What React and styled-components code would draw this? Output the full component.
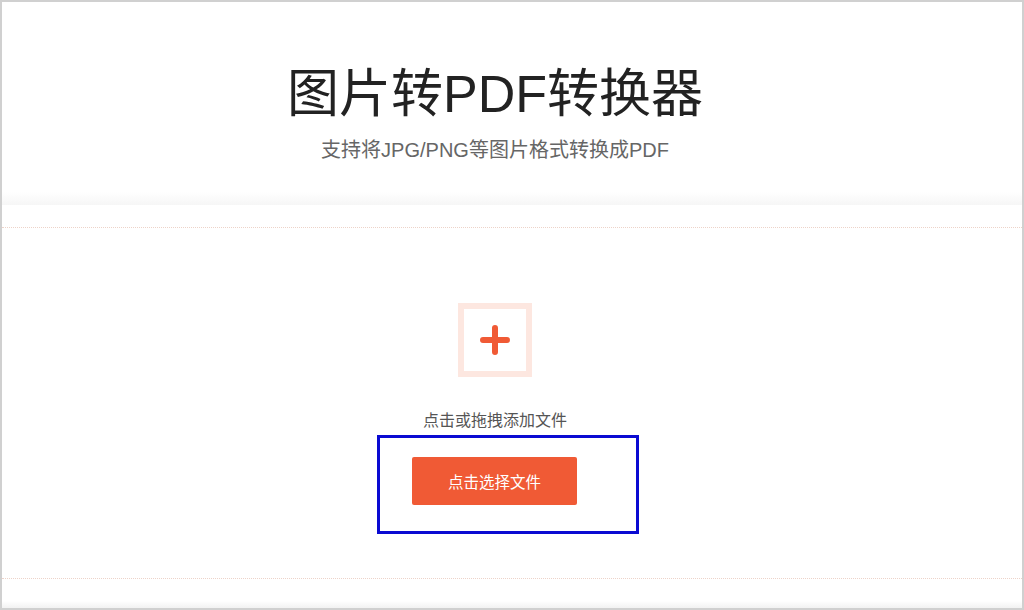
import React from 'react'
import styled, { createGlobalStyle } from 'styled-components'

const GlobalStyle = createGlobalStyle`
  html, body {
    margin: 0;
    padding: 0;
    background: #fff;
  }
  * {
    box-sizing: border-box;
  }
`

const Page = styled.div`
  width: 1024px;
  height: 610px;
  border: 2px solid #d0d0d0;
  overflow: hidden;
  background: #fff;
  font-family: "Liberation Sans", "Noto Sans CJK SC", sans-serif;
  padding-right: 34px;
  display: flex;
  flex-direction: column;
`

const Header = styled.header`
  height: 203px;
  display: flex;
  flex-direction: column;
  align-items: center;
  padding-top: 61px;
  background: linear-gradient(to bottom, #fff 0, #fff 190px, #f6f6f6 203px);
  margin-right: -34px;
  padding-right: 34px;
`

const Title = styled.h1`
  margin: 0;
  font-size: 52px;
  line-height: 62px;
  font-weight: 400;
  color: #222;
`

const Subtitle = styled.p`
  margin: 12px 0 0;
  font-size: 20px;
  line-height: 26px;
  color: #666;
`

const Upload = styled.section`
  margin-top: 22px;
  height: 352px;
  border-top: 1px dotted #edd3c9;
  border-bottom: 1px dotted #edd3c9;
  margin-right: -34px;
  padding-right: 34px;
  display: flex;
  flex-direction: column;
  align-items: center;
  padding-top: 75px;
`

const AddBox = styled.div`
  width: 74px;
  height: 74px;
  border: 6px solid #fde7e0;
  display: flex;
  align-items: center;
  justify-content: center;
`

const Hint = styled.div`
  margin-top: 33px;
  font-size: 16px;
  line-height: 22px;
  color: #555;
`

const Highlight = styled.div`
  margin-top: 3px;
  margin-left: 26px;
  border: 3px solid #0a0ad2;
  padding: 19px 59px 26px 32px;
`

const PickButton = styled.button`
  width: 165px;
  height: 48px;
  border: 0;
  border-radius: 2px;
  background: #f05a35;
  color: #fff;
  font-family: "Liberation Sans", "Noto Sans CJK SC", sans-serif;
  font-size: 15.5px;
  cursor: pointer;
  display: block;
`

const Footer = styled.div`
  margin-top: 17px;
  flex: 1;
  margin-right: -34px;
  background: linear-gradient(to bottom, #fff 0, #fff 40%, #f2f2f2 100%);
`

const Plus = () => (
  <svg width="30" height="30" viewBox="0 0 30 30">
    <path d="M15 3 V27 M3 15 H27" stroke="#f05a35" strokeWidth="6" strokeLinecap="round" />
  </svg>
)

export default function App() {
  return (
    <>
      <GlobalStyle />
      <Page>
        <Header>
          <Title>图片转PDF转换器</Title>
          <Subtitle>支持将JPG/PNG等图片格式转换成PDF</Subtitle>
        </Header>
        <Upload>
          <AddBox>
            <Plus />
          </AddBox>
          <Hint>点击或拖拽添加文件</Hint>
          <Highlight>
            <PickButton>点击选择文件</PickButton>
          </Highlight>
        </Upload>
        <Footer />
      </Page>
    </>
  )
}
